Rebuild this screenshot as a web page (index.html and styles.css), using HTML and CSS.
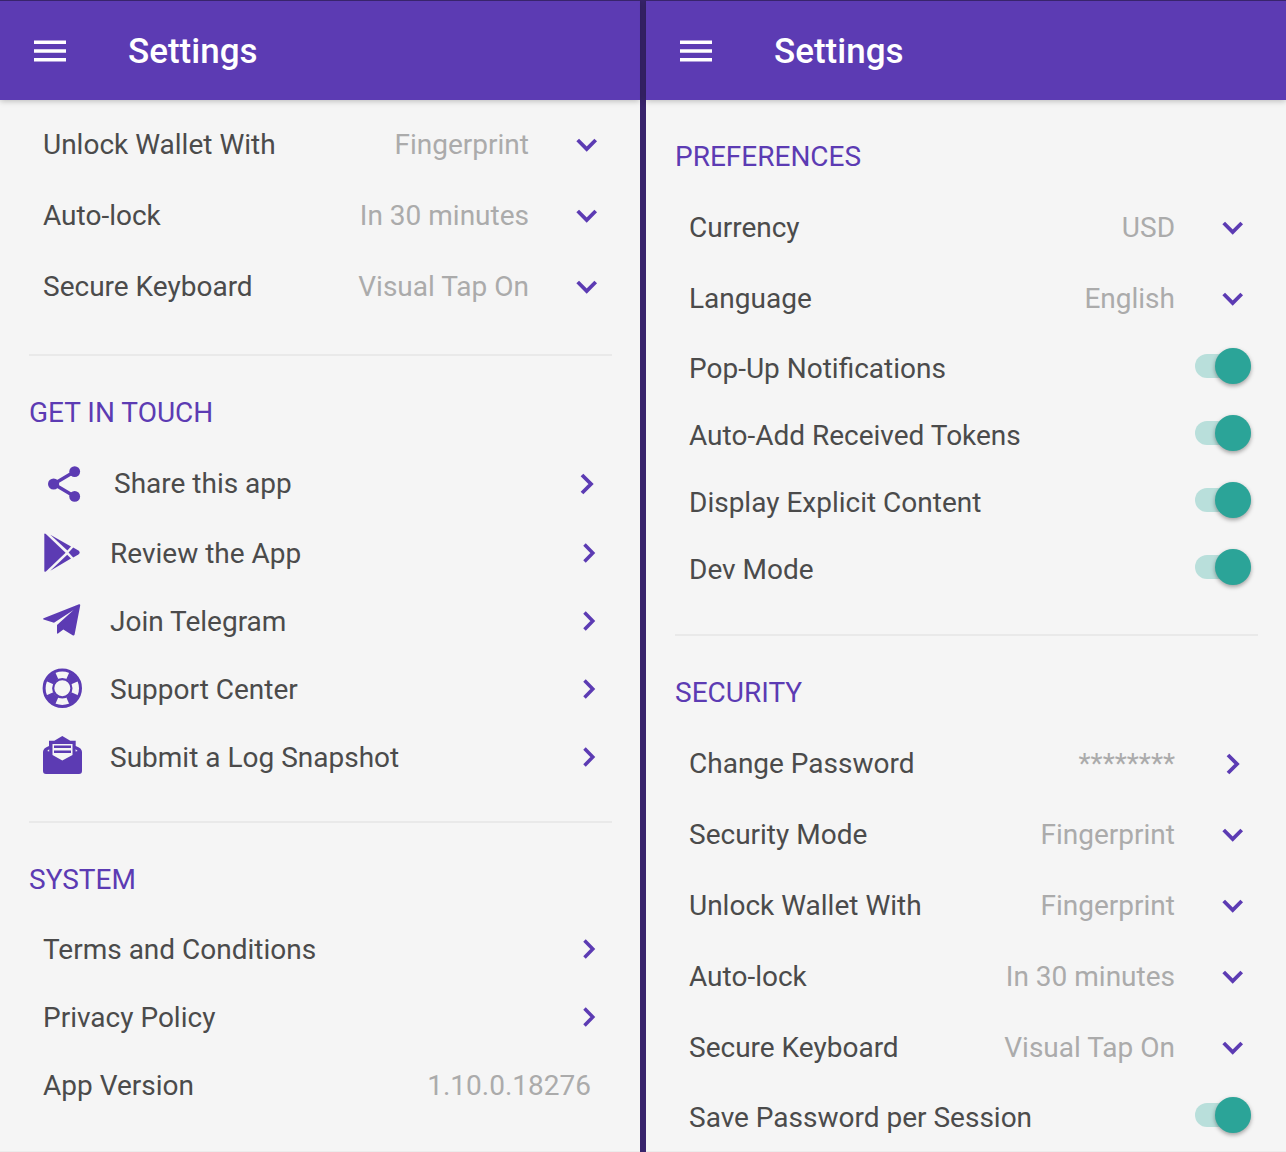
FILE: index.html
```html
<!DOCTYPE html>
<html lang="en">
<head>
<meta charset="utf-8">
<meta name="viewport" content="width=device-width, initial-scale=1">
<title>Settings</title>
<link rel="stylesheet" href="styles.css">
</head>
<body>
<svg class="defs" aria-hidden="true">
  <symbol id="down" viewBox="0 0 24 24"><path d="M2.7 7l9 9 9-9" fill="none" stroke="currentColor" stroke-width="3.8"/></symbol>
  <symbol id="right" viewBox="0 0 24 24"><path d="M7 3l9 9-9 9" fill="none" stroke="currentColor" stroke-width="3.8"/></symbol>
  <symbol id="right-small" viewBox="0 0 24 24"><path d="M9.5 3.5l8.3 8.5-8.3 8.5" fill="none" stroke="currentColor" stroke-width="3.5"/></symbol>
  <symbol id="menu" viewBox="0 0 32 22"><path d="M0 2.2h32M0 11h32M0 19.8h32" fill="none" stroke="currentColor" stroke-width="3.6"/></symbol>
</svg>
<main class="screens">
  <section class="screen">
    <header class="bar">
      <button class="menu" aria-label="Open menu"><svg><use href="#menu"/></svg></button>
      <h1 class="title">Settings</h1>
    </header>
    <div class="content content-scrolled">
      <div class="group">
        <div class="row">
          <label for="l-unlock">Unlock Wallet With</label>
          <select id="l-unlock"><option>Fingerprint</option><option>Password</option></select>
          <svg class="chevron"><use href="#down"/></svg>
        </div>
        <div class="row">
          <label for="l-lock">Auto-lock</label>
          <select id="l-lock"><option>In 30 minutes</option><option>Never</option></select>
          <svg class="chevron"><use href="#down"/></svg>
        </div>
        <div class="row">
          <label for="l-keyboard">Secure Keyboard</label>
          <select id="l-keyboard"><option>Visual Tap On</option><option>Visual Tap Off</option></select>
          <svg class="chevron"><use href="#down"/></svg>
        </div>
      </div>
      <div class="group group-links">
        <h2 class="heading">GET IN TOUCH</h2>
        <a class="row row-share" href="#share">
          <svg class="icon" viewBox="2 0 40 40"><path d="M33.7 7.5L12.7 20l21 12.5" fill="none" stroke="currentColor" stroke-width="3.4"/><g fill="currentColor"><circle cx="12.6" cy="20" r="5.6"/><circle cx="33.7" cy="7.6" r="5.4"/><circle cx="33.7" cy="32.4" r="5.4"/></g></svg>
          <span>Share this app</span>
          <svg class="chevron"><use href="#right"/></svg>
        </a>
        <a class="row row-link" href="#review">
          <svg class="icon" viewBox="2 0 40 40" fill="currentColor"><path d="M3.3 1.6Q3.3 0 4.9 1L24.6 19.7 4.9 38.4Q3.3 39.4 3.3 37.8z"/><path d="M9.3 1.7l20.7 11.8-3.6 4z"/><path d="M9.3 37.7L26.2 21.8l3.8 3.8z"/><path d="M32.2 14.6l5.2 3q2.6 2 0 4l-5.2 3-4.6-5z"/></svg>
          <span>Review the App</span>
          <svg class="chevron"><use href="#right-small"/></svg>
        </a>
        <a class="row row-link" href="#telegram">
          <svg class="icon" viewBox="2 0 40 40" fill="currentColor"><path d="M2.6 17.2L38 3.2q1.4-.2 1.2 1.2L33.6 33.4q-.6 1.6-2 .8L22.3 28.4 17 32.6q-1 .4-1-.8V24L32.6 8.9 13 21.8 2.6 18.5q-1.2-.6 0-1.3z"/></svg>
          <span>Join Telegram</span>
          <svg class="chevron"><use href="#right-small"/></svg>
        </a>
        <a class="row row-link" href="#support">
          <svg class="icon" viewBox="2 0 40 40"><circle cx="21.3" cy="19.2" r="18.2" fill="none" stroke="currentColor" stroke-width="3"/><circle cx="21.3" cy="19.2" r="9.1" fill="none" stroke="currentColor" stroke-width="2.2"/><circle cx="21.3" cy="19.2" r="13.5" fill="none" stroke="currentColor" stroke-width="7.4" pathLength="80" stroke-dasharray="9.4 10.6" stroke-dashoffset="-5.3"/></svg>
          <span>Support Center</span>
          <svg class="chevron"><use href="#right-small"/></svg>
        </a>
        <a class="row row-link" href="#log">
          <svg class="icon" viewBox="2 0 40 40"><path d="M21.3-1l8 4.7h5.4V9Q41 11 41 15v19q0 3-3 3H5q-3 0-3-3V15q0-4 6-6V3.7h5.3z" fill="currentColor"/><path class="paper" d="M11.5 7h20v11L21.3 23.4 11.5 18zM8.2 12.2l-2 1.8 2 .6zM34.6 12.2l2 1.8-2 .6z"/><path d="M13 9.8h17M13 14.8h17" stroke="currentColor" stroke-width="2.4"/></svg>
          <span>Submit a Log Snapshot</span>
          <svg class="chevron"><use href="#right-small"/></svg>
        </a>
      </div>
      <div class="group">
        <h2 class="heading">SYSTEM</h2>
        <a class="row row-link" href="#terms"><span>Terms and Conditions</span><svg class="chevron"><use href="#right-small"/></svg></a>
        <a class="row row-link" href="#privacy"><span>Privacy Policy</span><svg class="chevron"><use href="#right-small"/></svg></a>
        <div class="row row-link row-version"><span>App Version</span><span class="value">1.10.0.18276</span></div>
      </div>
    </div>
  </section>
  <section class="screen">
    <header class="bar">
      <button class="menu" aria-label="Open menu"><svg><use href="#menu"/></svg></button>
      <h1 class="title">Settings</h1>
    </header>
    <div class="content">
      <div class="group">
        <h2 class="heading">PREFERENCES</h2>
        <div class="row">
          <label for="currency">Currency</label>
          <select id="currency"><option>USD</option><option>EUR</option></select>
          <svg class="chevron"><use href="#down"/></svg>
        </div>
        <div class="row">
          <label for="language">Language</label>
          <select id="language"><option>English</option><option>Deutsch</option></select>
          <svg class="chevron"><use href="#down"/></svg>
        </div>
        <div class="row row-switch"><label for="popup">Pop-Up Notifications</label><input class="switch" type="checkbox" role="switch" id="popup" checked></div>
        <div class="row row-switch"><label for="autoadd">Auto-Add Received Tokens</label><input class="switch" type="checkbox" role="switch" id="autoadd" checked></div>
        <div class="row row-switch"><label for="explicit">Display Explicit Content</label><input class="switch" type="checkbox" role="switch" id="explicit" checked></div>
        <div class="row row-switch"><label for="dev">Dev Mode</label><input class="switch" type="checkbox" role="switch" id="dev" checked></div>
      </div>
      <div class="group">
        <h2 class="heading">SECURITY</h2>
        <a class="row" href="#password"><span>Change Password</span><span class="value">********</span><svg class="chevron"><use href="#right"/></svg></a>
        <div class="row">
          <label for="mode">Security Mode</label>
          <select id="mode"><option>Fingerprint</option><option>Password</option></select>
          <svg class="chevron"><use href="#down"/></svg>
        </div>
        <div class="row">
          <label for="r-unlock">Unlock Wallet With</label>
          <select id="r-unlock"><option>Fingerprint</option><option>Password</option></select>
          <svg class="chevron"><use href="#down"/></svg>
        </div>
        <div class="row">
          <label for="r-lock">Auto-lock</label>
          <select id="r-lock"><option>In 30 minutes</option><option>Never</option></select>
          <svg class="chevron"><use href="#down"/></svg>
        </div>
        <div class="row">
          <label for="r-keyboard">Secure Keyboard</label>
          <select id="r-keyboard"><option>Visual Tap On</option><option>Visual Tap Off</option></select>
          <svg class="chevron"><use href="#down"/></svg>
        </div>
        <div class="row row-switch"><label for="session">Save Password per Session</label><input class="switch" type="checkbox" role="switch" id="session" checked></div>
      </div>
    </div>
  </section>
</main>
</body>
</html>
```
FILE: styles.css
```css
:root {
  --purple: #5c3bb3;
  --deep: #38246c;
  --page: #f5f5f5;
  --teal: #2ba498;
}

* { box-sizing: border-box; }

body {
  margin: 0;
  background: var(--page);
  color: #4b4b4b;
  font: 400 28px/36px Roboto, "Liberation Sans", sans-serif;
}

.defs { display: none; }

.screens {
  display: grid;
  grid-template-columns: 1fr 1fr;
  gap: 6px;
  height: 100vh;
  background: var(--deep);
}

.screen {
  display: flex;
  flex-direction: column;
  min-width: 0;
  min-height: 0;
  background: var(--page);
}

.bar {
  display: flex;
  flex: none;
  align-items: center;
  gap: 62px;
  height: 100px;
  padding: 0 34px;
  border-top: 1px solid var(--deep);
  background: var(--purple);
  color: #fff;
  box-shadow: 0 1px 6px rgba(0, 0, 0, .25);
  z-index: 1;
}

.menu {
  padding: 0;
  border: 0;
  background: none;
  color: inherit;
}

.menu svg { display: block; width: 32px; height: 22px; }

.title {
  margin: 0;
  padding-top: 2px;
  font-size: 35px;
  font-weight: 500;
  line-height: 44px;
}

.content {
  flex: 1;
  min-height: 0;
  overflow-y: auto;
  scrollbar-width: none;
  border-bottom: 1px solid #ececec;
}

.content-scrolled { padding-top: 9px; }

.group { margin: 0 28px 0 29px; padding: 21px 0 32px; }
.content-scrolled .group:first-child { padding-top: 0; }
.group-links { padding-bottom: 30px; }
.group + .group { border-top: 2px solid #e9e9e9; }

.heading {
  margin: 0;
  color: var(--purple);
  font-size: 28px;
  font-weight: 400;
  line-height: 71px;
}

.row {
  display: flex;
  align-items: center;
  height: 71px;
  padding: 0 13px 0 14px;
  color: inherit;
  text-decoration: none;
  white-space: nowrap;
}

.row-link { height: 68px; }
.row-link span { padding-top: 2px; }
.row-switch { height: 67px; padding-right: 7px; justify-content: space-between; }
.row-switch label { padding-top: 2px; }
.row-version { padding-right: 21px; }

.icon {
  flex: none;
  width: 40px;
  height: 40px;
  margin-right: 27px;
  overflow: visible;
  color: var(--purple);
}

.row-share .icon { margin-right: 31px; }
.paper { fill: var(--page); }

.chevron {
  flex: none;
  width: 24px;
  height: 24px;
  margin-left: auto;
  color: var(--purple);
}

select,
.value {
  flex: 1;
  min-width: 0;
  margin: 0;
  color: #ababab;
  text-align: right;
}

select {
  appearance: none;
  height: 40px;
  padding: 0;
  border: 0;
  background: none;
  font: inherit;
  text-align-last: right;
}

select + .chevron,
.value + .chevron { margin-left: 46px; }

.switch {
  appearance: none;
  display: flex;
  align-items: center;
  justify-content: flex-end;
  flex: none;
  width: 56px;
  height: 24px;
  margin: 0 0 4px;
  border-radius: 12px;
  background: #b9dfdb;
}

.switch::before {
  content: "";
  flex: none;
  width: 36px;
  height: 36px;
  border-radius: 50%;
  background: var(--teal);
  box-shadow: 0 2px 4px rgba(0, 0, 0, .35);
}
```
